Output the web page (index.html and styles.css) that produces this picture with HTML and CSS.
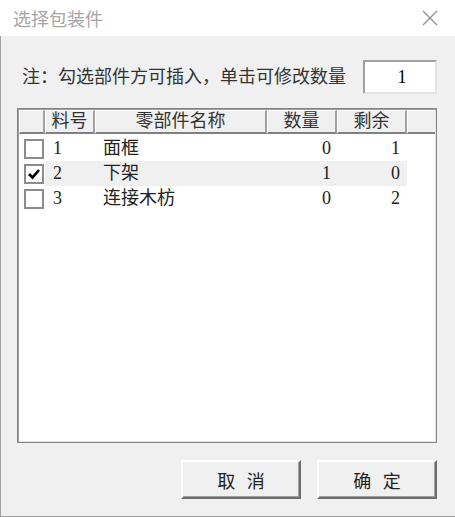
FILE: index.html
```html
<!DOCTYPE html>
<html lang="zh-CN">
<head>
  <meta charset="UTF-8" />
  <title>选择包装件</title>
  <link rel="stylesheet" href="styles.css">
</head>
<body>
  <div class="window">
    <div class="titlebar">
      <span class="title">选择包装件</span>
      <svg class="close" width="16" height="16" viewBox="0 0 16 16">
        <path d="M1 1 L15 15 M15 1 L1 15" stroke="#8c8c8c" stroke-width="1.2" fill="none" />
      </svg>
    </div>

    <div class="content">
      <div class="note-row">
        <span class="note">注：勾选部件方可插入，单击可修改数量</span>
        <div class="qty-input">1</div>
      </div>

      <div class="list">
        <div class="list-head">
          <div class="col c-check"></div>
          <div class="col c-no">料号</div>
          <div class="col c-name">零部件名称</div>
          <div class="col c-qty">数量</div>
          <div class="col c-left">剩余</div>
          <div class="col c-fill"></div>
        </div>
        <div class="list-body" id="rows"></div>
      </div>

      <div class="buttons">
        <button class="btn">取 消</button>
        <button class="btn">确 定</button>
      </div>
    </div>
  </div>

  <script>
    const parts = [
      { no: 1, name: '面框', qty: 0, left: 1, checked: false },
      { no: 2, name: '下架', qty: 1, left: 0, checked: true },
      { no: 3, name: '连接木枋', qty: 0, left: 2, checked: false }
    ];

    const tick = '<svg width="14" height="14" viewBox="0 0 14 14"><path d="M2 7 L5.5 10.5 L12 3" stroke="#000" stroke-width="2.6" fill="none" /></svg>';

    const rows = document.getElementById('rows');
    parts.forEach(p => {
      rows.innerHTML += `
        <div class="row ${p.checked ? 'selected' : ''}">
          <div class="cell c-check"><span class="box">${p.checked ? tick : ''}</span></div>
          <div class="cell c-no">${p.no}</div>
          <div class="cell c-name">${p.name}</div>
          <div class="cell c-qty">${p.qty}</div>
          <div class="cell c-left">${p.left}</div>
        </div>`;
    });
  </script>
</body>
</html>
```

FILE: styles.css
```css
body {
  margin: 0;
  background: #f0f0f0;
  font-family: 'Liberation Serif', 'Noto Sans CJK SC', serif;
  color: #000;
}

.window {
  width: 455px;
  height: 517px;
  background: #f0f0f0;
}

.titlebar {
  height: 36px;
  background: #fff;
  display: flex;
  align-items: center;
  justify-content: space-between;
  padding: 0 17px 0 13px;
  box-sizing: border-box;
}

.title {
  font-family: 'Noto Sans CJK SC', sans-serif;
  font-size: 18px;
  color: #a6a6a6;
  line-height: 1;
  margin-top: -1px;
}

.close {
  margin-top: -1px;
}

.content {
  height: 481px;
  box-sizing: border-box;
  border-left: 1px solid #a0a0a0;
  border-bottom: 1px solid #a0a0a0;
  padding: 24px 18px 0 16px;
}

.note-row {
  height: 34px;
  display: flex;
  align-items: center;
  justify-content: space-between;
}

.note {
  padding-left: 5px;
  font-size: 18px;
  line-height: 1;
  color: #333;
}

.qty-input {
  width: 74px;
  height: 34px;
  box-sizing: border-box;
  background: #fff;
  border: 2px solid;
  border-color: #a0a0a0 #e3e3e3 #e3e3e3 #a0a0a0;
  font-size: 18px;
  line-height: 30px;
  text-align: center;
  padding-left: 4px;
}

.list {
  margin-top: 14px;
  height: 335px;
  box-sizing: border-box;
  background: #fff;
  border: 1px solid #828282;
  box-shadow: inset 1px 1px 0 #a0a0a0, inset -1px -1px 0 #e3e3e3;
  padding: 1px;
}

.list-head {
  display: flex;
  height: 24px;
}

.col {
  box-sizing: border-box;
  background: #f0f0f0;
  border-top: 1px solid #fff;
  border-left: 1px solid #fff;
  border-right: 2px solid #a0a0a0;
  border-bottom: 2px solid #808080;
  font-size: 18px;
  line-height: 21px;
  text-align: center;
  color: #333;
}

.c-check { width: 26px; }
.c-no { width: 50px; }
.c-name { width: 172px; }
.c-qty { width: 70px; }
.c-left { width: 70px; }
.c-fill { flex: 1; border-right: none; }

.list-body {
  padding-top: 2px;
}

.row {
  display: flex;
  height: 25px;
  font-size: 18px;
  line-height: 25px;
  color: #222;
}

.cell {
  box-sizing: border-box;
}

.cell.c-check {
  display: flex;
  align-items: center;
  padding-left: 5px;
}

.cell.c-no,
.cell.c-name {
  padding-left: 8px;
}

.cell.c-qty {
  text-align: right;
  padding-right: 6px;
}

.cell.c-left {
  text-align: right;
  padding-right: 7px;
}

.row.selected .cell:not(.c-check) {
  background: #f0f0f0;
}

.box {
  width: 20px;
  height: 20px;
  box-sizing: border-box;
  border: 2px solid #8c8c8c;
  background: #fff;
  display: flex;
  align-items: center;
  justify-content: center;
}

.buttons {
  margin-top: 17px;
  display: flex;
  justify-content: flex-end;
  gap: 16px;
}

.btn {
  width: 120px;
  height: 39px;
  box-sizing: border-box;
  background: #f0f0f0;
  border: 2px solid;
  border-color: #fff #6d6d6d #6d6d6d #fff;
  box-shadow: inset -1px -1px 0 #a0a0a0;
  font-family: 'Liberation Serif', 'Noto Sans CJK SC', serif;
  font-size: 18px;
  word-spacing: 7px;
  color: #222;
  padding: 0;
}
```
